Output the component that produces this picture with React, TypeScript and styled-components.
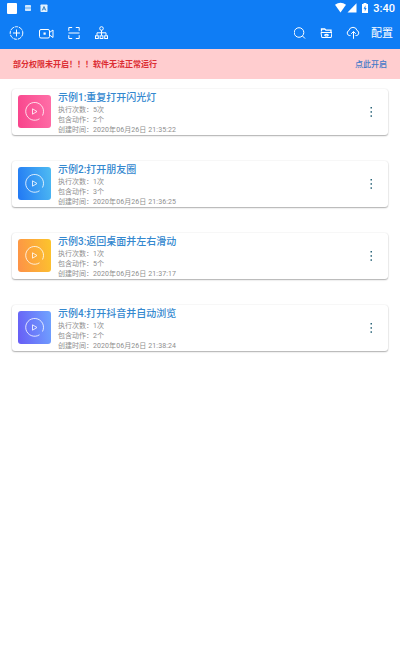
import React from 'react';
import styled, { createGlobalStyle } from 'styled-components';

const GlobalStyle = createGlobalStyle`
  * { box-sizing: border-box; }
  body {
    margin: 0;
    background: #fff;
    font-family: Roboto, "Noto Sans CJK SC", sans-serif;
  }
  svg { display: block; flex: none; }
`;

const Screen = styled.div`
  width: 400px;
  height: 660px;
  overflow: hidden;
  background: #fff;
`;

const Header = styled.header`
  height: 49px;
  background: #0f7df5;
  color: #fff;
`;

const StatusBar = styled.div`
  height: 16px;
  display: flex;
  align-items: center;
  justify-content: space-between;
  padding: 0 5px 0 7px;
`;

const StatusGroup = styled.div`
  display: flex;
  align-items: center;
`;

const Clock = styled.span`
  font-size: 11px;
  font-weight: 500;
  line-height: 16px;
  margin-left: 4px;
  padding-top: 1px;
`;

const Toolbar = styled.nav`
  height: 33px;
  display: flex;
  align-items: center;
  justify-content: space-between;
  padding: 0 7px 0 9px;
`;

const ToolGroup = styled.div`
  display: flex;
  align-items: center;
  gap: 14px;
`;

const LeadingTools = styled(ToolGroup)`
  gap: 14.5px;
`;

const ConfigLabel = styled.span`
  font-size: 11px;
  line-height: 16px;
  margin-left: -3px;
  padding-top: 2px;
`;

const Banner = styled.div`
  height: 30px;
  display: flex;
  align-items: center;
  justify-content: space-between;
  padding: 2px 13px 0;
  background: #ffcdcf;
  font-size: 8px;
  line-height: 12px;
`;

const Warning = styled.span`
  color: #dc2d33;
  font-weight: 700;
`;

const BannerLink = styled.span`
  color: #4279c8;
  font-weight: 500;
`;

const List = styled.main`
  display: flex;
  flex-direction: column;
  gap: 26px;
  padding: 10px 12px 0;
`;

const Card = styled.article`
  height: 46px;
  display: flex;
  align-items: center;
  padding: 0 14px 0 6px;
  border-radius: 3px;
  background: #fff;
  box-shadow: 0 1px 1.5px rgba(0, 0, 0, 0.3), 0 0 1.5px rgba(0, 0, 0, 0.12);
`;

const Thumb = styled.div<{ $from: string; $to: string }>`
  width: 33px;
  height: 33px;
  flex: none;
  display: grid;
  place-items: center;
  margin-bottom: 1px;
  border-radius: 3px;
  background: linear-gradient(80deg, ${({ $from }) => $from}, ${({ $to }) => $to});
`;

const Info = styled.div`
  flex: 1;
  height: 46px;
  margin-left: 7px;
  padding-top: 1px;
  white-space: nowrap;
`;

const Title = styled.h2`
  margin: 0;
  font-size: 10px;
  font-weight: 500;
  line-height: 15px;
  color: #3488cf;
`;

const Meta = styled.p`
  margin: 0;
  font-size: 7px;
  line-height: 10px;
  color: #8e8e8e;
`;

const Stamp = styled.span`
  letter-spacing: 0.09px;
`;

const line = { fill: 'none', stroke: '#fff', strokeWidth: 1 } as const;

const NoticeIcons = () => (
  <svg width="42" height="16" viewBox="0 0 42 16">
    <rect x="0" y="3" width="10" height="11" rx="1" fill="#fff" />
    <rect x="18" y="5" width="6" height="6" rx=".7" fill="#cfe7ff" />
    <path d="M18 8h6" stroke="#5ba5f0" />
    <rect x="33.5" y="4.500" width="7" height="7.500" rx=".7" fill="#e0f1ff" />
    <path d="M35.200 10.500 37 6.500l1.800 4M36 9h2" fill="none" stroke="#327fc0" strokeWidth=".9" />
  </svg>
);

const SignalIcons = () => (
  <svg width="34" height="16" viewBox="0 0 34 16">
    <path d="M0 4.800Q5.500.800 11 4.800L5.500 12.500Z" fill="#fff" />
    <path d="M21.500 3.200V12.500H12.500Z" fill="#fff" />
    <path d="M27 4h1.500V3h3v1H33v9h-6Z" fill="#fff" />
    <path d="M30.500 5.200 28.600 8.800h1.200v2.600l1.800-3.500h-1.200Z" fill="#0f7df5" />
  </svg>
);

const AddIcon = () => (
  <svg width="15" height="16" viewBox="0 0 15 16" {...line}>
    <circle cx="7.500" cy="8" r="6.300" strokeDasharray="3.700 .8" />
    <path d="M4 8h7M7.500 4.500v7" />
  </svg>
);

const CameraIcon = () => (
  <svg width="15" height="16" viewBox="0 0 15 16" {...line}>
    <rect x=".5" y="4.500" width="10" height="8.500" rx="1.500" />
    <path d="M10.500 7.500 14 5v7.500L10.500 10" />
    <rect x="4.500" y="7.500" width="2.200" height="2.200" fill="#fff" stroke="none" />
  </svg>
);

const ScanIcon = () => (
  <svg width="12" height="16" viewBox="0 0 12 16" {...line}>
    <path d="M.8 5.800V2.500h3.400M7.800 2.500h3.400v3.300M.8 10.200v3.300h3.400M7.800 13.500h3.400v-3.300M.5 8h11" />
  </svg>
);

const TreeIcon = () => (
  <svg width="13" height="16" viewBox="0 0 13 16" {...line}>
    <circle cx="6.500" cy="3.500" r="1.800" />
    <path d="M6.500 5.300v5M2 10.500V7.800h9v2.700" />
    <rect x=".5" y="10.800" width="2.800" height="2.700" />
    <rect x="5.100" y="10.800" width="2.800" height="2.700" />
    <rect x="9.700" y="10.800" width="2.800" height="2.700" />
  </svg>
);

const SearchIcon = () => (
  <svg width="12" height="16" viewBox="0 0 12 16" {...line}>
    <circle cx="5" cy="7.500" r="4.800" />
    <path d="m8.500 11 2.500 2.500" />
  </svg>
);

const FolderIcon = () => (
  <svg width="12" height="16" viewBox="0 0 12 16" {...line}>
    <path d="M1.500 6.500V4h3.200L6 5.200h5v1.800" strokeWidth="1.300" />
    <path d="M1 7.500h11l-.8 5H1.800Z" />
    <path d="M4.300 10.500q2.200-2.200 4.400 0M5 11h3" strokeWidth="1.200" />
  </svg>
);

const CloudIcon = () => (
  <svg width="14" height="16" viewBox="0 0 14 16" {...line}>
    <path d="M4.500 10.500H3.200A2.600 2.600 0 0 1 3 5.500 4.100 4.100 0 0 1 11 5.500a2.600 2.600 0 0 1-.2 5H9.500M7.500 13.800V6.500M5.200 8.800 7.500 6.500l2.300 2.300" />
  </svg>
);

const PlayIcon = () => (
  <svg width="21" height="21" viewBox="0 0 21 21" {...line} strokeOpacity=".8">
    <path d="M15.500 17.800A8.900 8.900 0 1 1 18.500 14.500" />
    <path d="M8.500 7.800v5.400l4.500-2.700Z" />
  </svg>
);

const MoreIcon = () => (
  <svg width="6" height="12" viewBox="0 0 6 12" fill="#2a6479">
    <rect x="2.500" y="1" width="1.500" height="1.500" />
    <rect x="2.500" y="5.200" width="1.500" height="1.500" />
    <rect x="2.500" y="9.300" width="1.500" height="1.500" />
  </svg>
);

const tasks = [
  { title: '示例1:重复打开闪光灯', runs: 5, actions: 2, time: '21:35:22', from: '#f8438b', to: '#ff70a8' },
  { title: '示例2:打开朋友圈', runs: 1, actions: 3, time: '21:36:25', from: '#2178f4', to: '#4fbcf2' },
  { title: '示例3:返回桌面并左右滑动', runs: 1, actions: 5, time: '21:37:17', from: '#fd9148', to: '#fcc52c' },
  { title: '示例4:打开抖音并自动浏览', runs: 1, actions: 2, time: '21:38:24', from: '#675cf5', to: '#70a5ff' },
];

export default function App() {
  return (
    <Screen>
      <GlobalStyle />
      <Header>
        <StatusBar>
          <NoticeIcons />
          <StatusGroup>
            <SignalIcons />
            <Clock>3:40</Clock>
          </StatusGroup>
        </StatusBar>
        <Toolbar>
          <LeadingTools>
            <AddIcon />
            <CameraIcon />
            <ScanIcon />
            <TreeIcon />
          </LeadingTools>
          <ToolGroup>
            <SearchIcon />
            <FolderIcon />
            <CloudIcon />
            <ConfigLabel>配置</ConfigLabel>
          </ToolGroup>
        </Toolbar>
      </Header>
      <Banner>
        <Warning>部分权限未开启！！！软件无法正常运行</Warning>
        <BannerLink>点此开启</BannerLink>
      </Banner>
      <List>
        {tasks.map((task) => (
          <Card key={task.title}>
            <Thumb $from={task.from} $to={task.to}>
              <PlayIcon />
            </Thumb>
            <Info>
              <Title>{task.title}</Title>
              <Meta>执行次数：{task.runs}次</Meta>
              <Meta>包含动作：{task.actions}个</Meta>
              <Meta>创建时间：<Stamp>2020年06月26日 {task.time}</Stamp></Meta>
            </Info>
            <MoreIcon />
          </Card>
        ))}
      </List>
    </Screen>
  );
}
